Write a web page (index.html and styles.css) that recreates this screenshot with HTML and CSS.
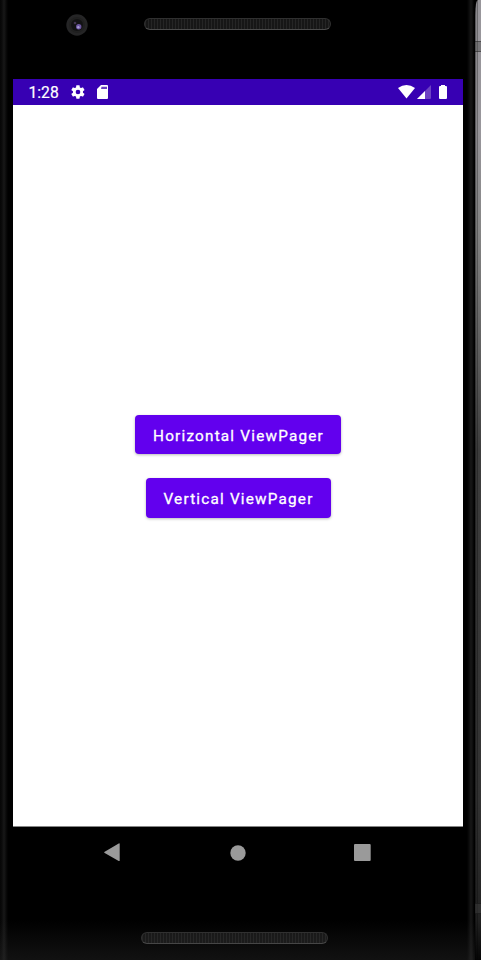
FILE: index.html
```html
<!DOCTYPE html>
<html lang="en">
<head>
<meta charset="utf-8">
<title>ViewPager</title>
<link rel="stylesheet" href="styles.css">
</head>
<body>
<div class="phone">
  <div class="edge-left"></div>
  <div class="body">
    <header class="top-bezel">
      <svg class="camera" width="22" height="22" viewBox="0 0 22 22">
        <circle cx="11" cy="11" r="10.7" fill="#252526"/>
        <circle cx="11" cy="11" r="8" fill="#202020"/>
        <circle cx="11" cy="11" r="6" fill="#121214"/>
        <circle cx="9" cy="9" r="1.3" fill="#41324f"/>
        <circle cx="12.7" cy="12.7" r="2.7" fill="#6b55a0"/>
        <circle cx="12.3" cy="13.2" r="1.2" fill="#a99bd5"/>
      </svg>
      <div class="speaker"></div>
    </header>
    <main class="screen">
      <div class="status">
        <span class="time">1:28</span>
        <svg class="gear" width="16" height="16" viewBox="0 0 24 24"><path fill="#fff" d="M19.4 13c.1-.3.1-.7.1-1s0-.7-.1-1l2.1-1.6c.2-.2.3-.4.1-.7l-2-3.400c-.1-.2-.4-.3-.6-.2l-2.500 1c-.5-.4-1.100-.7-1.700-1l-.4-2.600c0-.3-.2-.5-.5-.5h-4c-.3 0-.5.2-.5.5L9 5.100c-.6.3-1.200.6-1.700 1l-2.500-1c-.2-.1-.5 0-.6.2l-2 3.400c-.1.300 0 .5.100.7L4.500 11c0 .3-.1.700-.1 1s0 .7.100 1l-2.200 1.600c-.1.200-.2.400-.1.700l2 3.400c.1.200.4.300.6.200l2.500-1c.5.400 1.100.7 1.700 1l.4 2.600c0 .3.200.5.500.5h4c.3 0 .5-.2.500-.5l.4-2.600c.6-.3 1.200-.6 1.700-1l2.500 1c.2.100.5 0 .6-.2l2-3.400c.2-.3.100-.5-.1-.7zM12 15.500a3.500 3.500 0 1 1 0-7 3.500 3.500 0 0 1 0 7z"/></svg>
        <svg class="card" width="11" height="14" viewBox="0 0 11 14"><path fill="#fff" d="M4 0h6q1 0 1 1v12q0 1-1 1H1q-1 0-1-1V4z"/><path fill="#6a3fc2" d="M4.500 1.700h5.500v2.300H4z"/></svg>
        <svg class="wifi" width="17" height="14" viewBox="0 0 17 14"><path fill="#fff" d="M0 3Q8.500-3 17 3L8.500 13.500z"/></svg>
        <svg class="signal" width="14" height="14" viewBox="0 0 14 14"><path fill="#6d42c4" d="M14 0v13q0 1-1 1H0z"/><path fill="#fff" d="M8 6v8H0z"/></svg>
        <svg class="battery" width="8" height="14" viewBox="0 0 8 14"><path fill="#fff" d="M2 0h4v1h1q1 0 1 1v11q0 1-1 1H1q-1 0-1-1V2q0-1 1-1h1z"/></svg>
      </div>
      <div class="content">
        <button class="btn horizontal">Horizontal ViewPager</button>
        <button class="btn vertical">Vertical ViewPager</button>
      </div>
    </main>
    <nav class="nav">
      <svg width="16" height="19" viewBox="0 0 16 19"><path fill="#9a9a9a" d="M.7 8.700 14.700.5q1-.5 1 .6v16.300q0 1-1 .5L.7 10.100q-1-.7 0-1.400z"/></svg>
      <svg class="home" width="16" height="16" viewBox="0 0 16 16"><circle cx="8" cy="8" r="7.700" fill="#9a9a9a"/></svg>
      <svg class="recent" width="17" height="17" viewBox="0 0 17 17"><rect width="16.700" height="17" rx="1" fill="#9a9a9a"/></svg>
    </nav>
    <footer class="bottom-bezel"><div class="speaker"></div></footer>
  </div>
  <div class="edge-right"></div>
  <div class="rail"><div class="joint joint-top"></div><div class="joint joint-bottom"></div></div>
</div>
</body>
</html>
```
FILE: styles.css
```css
* { box-sizing: border-box; }
body { margin: 0; background: #000; font-family: Roboto, "Liberation Sans", sans-serif; }
.phone { position: relative; display: flex; width: 481px; height: 960px; overflow: hidden; background: #000; }
.phone::after {
  content: ""; position: absolute; left: 0; right: 6px; bottom: 0; height: 40px;
  background: linear-gradient(transparent, rgba(50, 50, 50, .35));
}
.edge-left { width: 13px; background: linear-gradient(90deg, #060606 0, #0c0c0c 2px, #181818 4px, #0b0b0b 6px, #000 8px); }
.body { width: 450px; display: flex; flex-direction: column; }
.edge-right { width: 12px; background: linear-gradient(90deg, #000 4px, #0b0b0b 6px, #171717 8px, #0b0b0b 10px, #000 11px); }
.rail {
  width: 6px; display: flex; flex-direction: column; border-top-left-radius: 3px 15px;
  background: linear-gradient(90deg, rgba(0,0,0,.4) 0 1px, rgba(0,0,0,.1) 1px 2px, rgba(0,0,0,.3) 2px 3px, transparent 3px),
    linear-gradient(#98969b 0, #98969b 130px, #858585 230px, #606060 350px, #3e3e3e 450px, #333 800px, #222 920px, #050505 960px);
}
.joint { height: 11px; border: solid rgba(0,0,0,.35); border-width: 1px 0; background: rgba(70,70,70,.4); }
.joint-top { margin-top: 41px; }
.joint-bottom { margin-top: 851px; }
.top-bezel { height: 79px; display: flex; align-items: flex-start; }
.camera { margin: 14px 0 0 53px; }
.speaker {
  width: 187px; height: 12px; border-radius: 6px; border: 1px solid #303030; border-bottom-color: #4b4b4b;
  background: repeating-linear-gradient(90deg, #252525 0 1px, #161616 1px 3px);
}
.top-bezel .speaker { margin: 18px 0 0 56px; }
.screen { height: 748px; display: flex; flex-direction: column; background: #fff; border-bottom: 1px solid #858585; }
.status { height: 26px; display: flex; align-items: flex-start; background: #3700b3; color: #fff; }
.time { width: 41.500px; margin-left: 15.500px; font-size: 15.700px; line-height: 19px; padding-top: 4px; font-weight: 400; -webkit-text-stroke: .2px #fff; }
.gear { margin-top: 5px; }
.card { margin: 6px 0 0 11px; }
.wifi { margin: 6px 0 0 auto; }
.signal { margin: 6px 0 0 2px; }
.battery { margin: 6px 16px 0 8px; }
.content { flex: 1; display: flex; flex-direction: column; align-items: center; padding-top: 310px; gap: 24px; }
.btn {
  height: 39px; padding: 2px 0 0 1px; border: 0; border-radius: 4px; background: #6200ee; color: #fff;
  font: 400 15.300px/18px Roboto, sans-serif; letter-spacing: 1.200px; white-space: nowrap;
  -webkit-text-stroke: .3px #fff; box-shadow: 0 1px 3px rgba(0,0,0,.28);
}
.horizontal { width: 206px; }
.vertical { width: 185px; height: 40px; }
.nav { height: 53px; display: flex; align-items: center; padding: 0 0 2px 91px; }
.home { margin-left: 109.500px; }
.recent { margin-left: 108px; }
.bottom-bezel { height: 80px; padding: 52px 0 0 128px; }
```
